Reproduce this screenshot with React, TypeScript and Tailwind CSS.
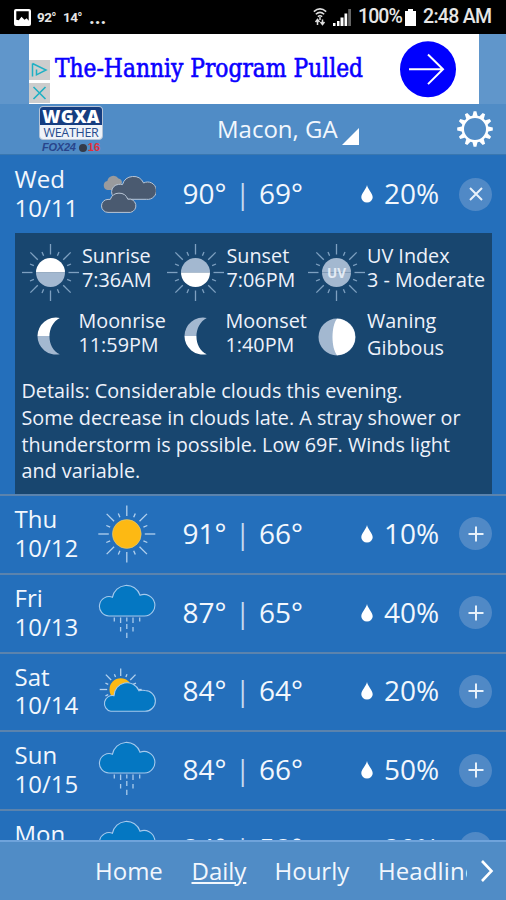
import { Fragment, type ReactNode } from "react";
import clsx from "clsx";

type Condition = "cloudy" | "sunny" | "rain" | "partly";

type Day = {
  name: string;
  date: string;
  condition: Condition;
  high: number;
  low: number;
  precip: number;
};

const days: Day[] = [
  { name: "Wed", date: "10/11", condition: "cloudy", high: 90, low: 69, precip: 20 },
  { name: "Thu", date: "10/12", condition: "sunny", high: 91, low: 66, precip: 10 },
  { name: "Fri", date: "10/13", condition: "rain", high: 87, low: 65, precip: 40 },
  { name: "Sat", date: "10/14", condition: "partly", high: 84, low: 64, precip: 20 },
  { name: "Sun", date: "10/15", condition: "rain", high: 84, low: 66, precip: 50 },
  { name: "Mon", date: "10/16", condition: "rain", high: 84, low: 58, precip: 20 },
];

const details = [
  "Details: Considerable clouds this evening.",
  "Some decrease in clouds late. A stray shower or",
  "thunderstorm is possible. Low 69F. Winds light",
  "and variable.",
];

// 16 rays, every second one is short
function Rays({ cx, cy, inner, outer, color }: { cx: number; cy: number; inner: number; outer: number; color: string }) {
  return (
    <g stroke={color} strokeWidth="1.3">
      {Array.from({ length: 16 }, (_, i) => {
        const a = (i * Math.PI) / 8;
        const end = i % 2 ? inner + (outer - inner) * 0.4 : outer;
        return (
          <line
            key={i}
            x1={cx + inner * Math.cos(a)}
            y1={cy + inner * Math.sin(a)}
            x2={cx + end * Math.cos(a)}
            y2={cy + end * Math.sin(a)}
          />
        );
      })}
    </g>
  );
}

function ConditionIcon({ condition }: { condition: Condition }) {
  return (
    <svg viewBox="0 0 58 58" fill="none" className="w-[58px] h-[58px] shrink-0">
      {condition === "cloudy" && (
        <>
          <path d="M9.5 25A4.6 4.6 0 0 1 9.3 16A6.2 6.2 0 0 1 20.5 13.5A4 4 0 0 1 24 18L18 25Z" fill="#9a9b9d" />
          <g fill="#4a5a70" stroke="#b9c6d6" strokeWidth="1">
            <path d="M20 34.3A7.5 7.5 0 0 1 20.5 19.4Q22.5 19 24.5 19.6A11.3 11.3 0 0 1 45.6 18A8.7 8.7 0 1 1 48.4 34.3Z" />
            <path d="M10 47.4A6.5 6.5 0 0 1 10 34.4L12.3 34.4A9.3 9.3 0 0 1 29.8 34.2A6.7 6.7 0 1 1 32.5 47.4Z" />
          </g>
        </>
      )}
      {condition === "sunny" && (
        <>
          <Rays cx={28.8} cy={29} inner={18} outer={28.5} color="#b3d1ee" />
          <circle cx="28.8" cy="29" r="14.4" fill="#fdb913" stroke="#d8c98a" strokeWidth=".6" />
        </>
      )}
      {condition === "rain" && (
        <>
          <path
            d="M11 32A9.7 9.7 0 1 1 14.5 13.2A14.2 14.2 0 0 1 42 11.2A10.8 10.8 0 1 1 46.5 32Z"
            fill="#0477c2"
            stroke="#a5c9ec"
            strokeWidth="1.1"
          />
          <g stroke="#a9cbec" strokeWidth="1.3">
            <path d="M16.3 33.5v4M41.7 33.5v4" />
            <path d="M22.6 33.5v5.5M22.6 43v4.5M35 33.5v5.5M35 43v4.5" />
            <path d="M28.8 33.5v4M28.8 40v5M28.8 48.8v5.2" />
          </g>
        </>
      )}
      {condition === "partly" && (
        <>
          <Rays cx={22.7} cy={27.5} inner={13.5} outer={21} color="#b3d1ee" />
          <circle cx="22.7" cy="27.5" r="11.2" fill="#fdb913" />
          <path
            d="M12.8 49.3A7.9 7.9 0 1 1 16 33.7A13 13 0 0 1 41 28.8Q44 28 47 28.5A10.4 10.4 0 1 1 47 49.3Z"
            fill="#0477c2"
            stroke="#a5c9ec"
            strokeWidth="1.1"
          />
        </>
      )}
    </svg>
  );
}

function AstroSun({ top, bottom, label }: { top: string; bottom: string; label?: string }) {
  return (
    <svg viewBox="0 0 58 58" className="w-[58px] h-[58px] shrink-0">
      <Rays cx={28.5} cy={28.5} inner={18} outer={28.5} color="#7ea0c0" />
      <path d="M14 28.5a14.5 14.5 0 0 1 29 0z" fill={top} />
      <path d="M14 28.5a14.5 14.5 0 0 0 29 0z" fill={bottom} />
      {label && (
        <text
          x="28.5"
          y="33.5"
          textAnchor="middle"
          fontSize="13.5"
          fontWeight="700"
          fill="#e3ebf4"
          fontFamily="Open Sans, sans-serif"
        >
          {label}
        </text>
      )}
    </svg>
  );
}

function Crescent({ top, bottom, id }: { top: string; bottom: string; id: string }) {
  return (
    <svg viewBox="0 0 24 38" className="w-6 h-[38px]">
      <clipPath id={id}>
        <path d="M23.8 1A18.5 18.5 0 1 0 23.8 37.2C10 31 10 8 23.8 1Z" />
      </clipPath>
      <g clipPath={`url(#${id})`}>
        <rect width="24" height="19" fill={top} />
        <rect y="19" width="24" height="19" fill={bottom} />
      </g>
    </svg>
  );
}

function Fact({ children, icon, className }: { children: ReactNode; icon: ReactNode; className?: string }) {
  return (
    <div className="flex">
      {icon}
      <div className={clsx("whitespace-nowrap", className)}>{children}</div>
    </div>
  );
}

function DayRow({ day, open }: { day: Day; open?: boolean }) {
  return (
    <div
      className={clsx(
        "flex items-center pl-[14.5px]",
        open ? "h-[78px]" : "h-[78.75px] border-t-2 border-[#5b83ad] pb-px"
      )}
    >
      <div className="w-[83px] shrink-0 text-[24px] leading-[28.8px]">
        <div>{day.name}</div>
        <div>{day.date}</div>
      </div>
      <ConditionIcon condition={day.condition} />
      <div className="ml-[27px] w-[175px] shrink-0 pb-[2px] text-[28px] whitespace-nowrap [word-spacing:1.3px]">
        {day.high}° <span className="text-[#c5daf0]">|</span> {day.low}°
      </div>
      <svg viewBox="0 0 12 18" className="w-3 h-[18px] ml-[3.5px] shrink-0">
        <path d="M6 0C6.6 4 11.7 8.3 11.7 12.2A5.7 5.4 0 0 1 .3 12.2C.3 8.3 5.4 4 6 0Z" fill="#fff" />
      </svg>
      <div className="w-[86px] shrink-0 pb-[2px] pl-[11px] text-[28px]">{day.precip}%</div>
      <button
        aria-label={open ? "Collapse" : "Expand"}
        className="flex size-[33px] items-center justify-center rounded-full bg-[#5089c6] shrink-0"
      >
        <svg viewBox="0 0 16 16" className="size-4" stroke="#e8f1fa" strokeWidth="2">
          <path d={open ? "M2 2l12 12M14 2L2 14" : "M8 .5v15M.5 8h15"} />
        </svg>
      </button>
    </div>
  );
}

function StatusBar() {
  return (
    <div className="flex h-[34px] shrink-0 items-center bg-black pl-[14px] font-[Roboto,sans-serif] text-[#e6e6e6]">
      <svg viewBox="0 0 17 17" className="size-[17px]">
        <rect width="17" height="17" rx="2" fill="#fff" />
        <path d="M2.3 2.3h12.4v9.5l-2-2.6-2.2 1.5-3-3-2.7 3.6-2.5-.5z" fill="#000" />
      </svg>
      <span className="ml-[6px] w-[26px] text-[13.5px] font-bold tracking-[-0.6px]">92°</span>
      <span className="w-[26px] text-[13.5px] font-bold tracking-[-0.6px]">14°</span>
      <span className="w-[18px] text-[20px] font-bold leading-none">...</span>
      <svg viewBox="0 0 14 18" fill="none" stroke="#ddd" strokeWidth="1.5" className="ml-[206px] w-[14px] h-[18px]">
        <path d="M.8 3.6Q7-1.8 13.2 3.6M2.8 6.2Q7 2.6 11.2 6.2M4.8 8.6Q7 7 9.2 8.6" />
        <path d="M7 9v3M4.5 17v-5M2.5 14l2-2.5 2 2.5M9.5 11.5v5M7.5 14l2 2.5 2-2.5" />
      </svg>
      <svg viewBox="0 0 18 17" className="ml-[6px] w-[18px] h-[17px]">
        <path d="M0 14h2.5v3H0zM4 12h2.5v5H4zM7.5 8.5h3V17h-3zM11.5 4.5h2.7V17h-2.7z" fill="#fff" />
        <path d="M15.2 0H18v17h-2.8z" fill="#666" />
      </svg>
      <span className="ml-[7px] w-[46px] text-[19.5px] font-medium tracking-[-0.9px]">100%</span>
      <svg viewBox="0 0 11 17" className="ml-px w-[11px] h-[17px]">
        <path d="M3 0h5v2h3v15H0V2h3z" fill="#fff" />
      </svg>
      <span className="ml-[7px] text-[19.5px] font-medium tracking-[-0.7px] whitespace-nowrap">2:48 AM</span>
    </div>
  );
}

function AdBanner() {
  return (
    <div className="h-[70px] shrink-0 bg-[#6096cb] pl-[29px] pr-[27px]">
      <div className="flex h-full bg-white">
        <div className="flex w-[21px] shrink-0 flex-col justify-end gap-[3px] pb-px">
          <svg viewBox="0 0 21 20" className="w-[21px] h-5 bg-[#cdcdcd]" fill="none" stroke="#1fb0c4" strokeWidth="1.5">
            <path d="M3.5 3.5v13M3.5 3.5L17 10 7.5 14.8V9.5" />
          </svg>
          <svg viewBox="0 0 21 20" className="w-[21px] h-5 bg-[#cdcdcd]" stroke="#1fb0c4" strokeWidth="1.6">
            <path d="M4.5 4l12 12M16.5 4l-12 12" />
          </svg>
        </div>
        <div className="w-[350px] shrink-0 pl-[5px] pt-[15px]">
          <div className="w-max origin-left scale-x-[0.915] font-['DejaVu_Serif_Condensed','DejaVu_Serif',serif] text-[26.5px] leading-[38px] whitespace-nowrap text-[#0a00ff] [-webkit-text-stroke:0.6px_#0a00ff]">
            The-Hanniy Program Pulled
          </div>
        </div>
        <svg viewBox="0 0 56 57" className="mt-[7px] w-14 h-[57px] shrink-0">
          <circle cx="28" cy="28.3" r="28" fill="#0000fe" />
          <path d="M9 28.3h34M28 13.5l15 14.8-15 14.8" fill="none" stroke="#fff" strokeWidth="2" />
        </svg>
      </div>
    </div>
  );
}

function Gear() {
  return (
    <svg viewBox="0 0 36 36" className="size-9" fill="#fff">
      {Array.from({ length: 12 }, (_, i) => (
        <path key={i} d="M15 7L16.6.2h2.8L21 7z" transform={`rotate(${i * 30} 18 18)`} />
      ))}
      <circle cx="18" cy="18" r="12.2" fill="#518cc6" stroke="#fff" strokeWidth="2.4" />
    </svg>
  );
}

function Header() {
  return (
    <div className="flex h-[51px] shrink-0 items-start border-b border-[#3977b0] bg-[#508cc6] pl-[39px]">
      <div className="mt-[2px] w-[64px]">
        <div className="h-[34px] overflow-hidden rounded-[4px] border border-[#b5c3d6] bg-[#eef3f9] text-center">
          <div className="h-[18px] bg-[#153d80] text-[17.5px] font-extrabold leading-[18px] tracking-[0.2px] text-white">
            WGXA
          </div>
          <div className="text-[12.5px] font-medium leading-[15px] tracking-[-0.3px] text-[#264b8c]">WEATHER</div>
        </div>
        <div className="mt-[2px] flex justify-center gap-[3px] font-['Liberation_Sans',sans-serif] text-[11px] font-bold italic leading-[11px]">
          <span className="tracking-[-0.2px] text-[#28458c]">FOX24</span>
          <span className="flex items-center not-italic text-[#e0303a]">
            <i className="mr-px size-[8px] rounded-full bg-[#333b49]" />
            16
          </span>
        </div>
      </div>
      <div className="ml-[114px] mt-[7px] w-[121px] text-[24px] leading-9 whitespace-nowrap">Macon, GA</div>
      <svg viewBox="0 0 17 17" className="ml-1 mt-6 size-[17px]">
        <path d="M17 0v17H0z" fill="#fff" />
      </svg>
      <div className="ml-[98px] mt-[7px]">
        <Gear />
      </div>
    </div>
  );
}

function DayDetails() {
  const lit = "#ffffff";
  const dim = "#a3b8d0";
  return (
    <div className="mx-[14.5px] h-[261px] shrink-0 bg-[#18466f] pt-[11px] pl-[7px] text-[19.8px] leading-6 text-[#eef2fb]">
      <div className="flex h-[65px]">
        <div className="w-[145px]">
          <Fact icon={<AstroSun top={lit} bottom={dim} />} className="ml-[2.5px]">
            Sunrise
            <br />
            7:36AM
          </Fact>
        </div>
        <div className="w-[141.5px]">
          <Fact icon={<AstroSun top={dim} bottom={lit} />} className="ml-[2px]">
            Sunset
            <br />
            7:06PM
          </Fact>
        </div>
        <Fact icon={<AstroSun top={dim} bottom={dim} label="UV" />} className="ml-px">
          UV Index
          <br />3 - Moderate
        </Fact>
      </div>
      <div className="flex h-[69px]">
        <div className="w-[145px]">
          <Fact
            icon={
              <div className="w-[57px] pl-[14px] pt-[8px]">
                <Crescent id="moonrise" top={lit} bottom={dim} />
              </div>
            }
          >
            Moonrise
            <br />
            11:59PM
          </Fact>
        </div>
        <div className="w-[141.5px]">
          <Fact
            icon={
              <div className="w-[59px] pl-[16px] pt-[8px]">
                <Crescent id="moonset" top={dim} bottom={lit} />
              </div>
            }
          >
            Moonset
            <br />
            1:40PM
          </Fact>
        </div>
        <Fact
          icon={
            <svg viewBox="0 0 38 38" className="ml-[9.5px] mr-[11.5px] mt-[8.5px] size-[38px]">
              <circle cx="19" cy="19" r="18.5" fill={dim} />
              <path d="M19 .8A18.2 18.2 0 0 1 19 37.2C13 30 13 8 19 .8Z" fill={lit} />
            </svg>
          }
          className="-mt-px leading-[26.5px]"
        >
          Waning
          <br />
          Gibbous
        </Fact>
      </div>
      <p className="leading-[26.8px] whitespace-nowrap">
        {details.map((line) => (
          <Fragment key={line}>
            {line}
            <br />
          </Fragment>
        ))}
      </p>
    </div>
  );
}

function TabBar() {
  return (
    <nav className="flex h-[60px] shrink-0 items-center border-t-2 border-[#6fa3db] bg-[#508cc6] pl-[95px] text-[24px] whitespace-nowrap">
      <a className="w-[96.5px]">Home</a>
      <a className="w-[83px] underline decoration-[1.5px] underline-offset-2">Daily</a>
      <a className="w-[103.5px]">Hourly</a>
      <a className="w-[88.5px] overflow-hidden tracking-[0.1px]">Headlines</a>
      <svg viewBox="0 0 14 22" className="ml-[13.5px] w-[14px] h-[22px]" fill="none" stroke="#fff" strokeWidth="2.6">
        <path d="M2 1l9.5 10L2 21" />
      </svg>
    </nav>
  );
}

export default function App() {
  const [today, ...rest] = days;
  return (
    <div className="flex h-[900px] w-[506px] flex-col overflow-hidden bg-[#246fbb] font-['Open_Sans','Noto_Sans',sans-serif] text-[#f2f7fd]">
      <StatusBar />
      <AdBanner />
      <Header />
      <div className="h-[685px] overflow-hidden">
        <DayRow day={today} open />
        <DayDetails />
        {rest.map((day) => (
          <DayRow key={day.date} day={day} />
        ))}
      </div>
      <TabBar />
    </div>
  );
}
